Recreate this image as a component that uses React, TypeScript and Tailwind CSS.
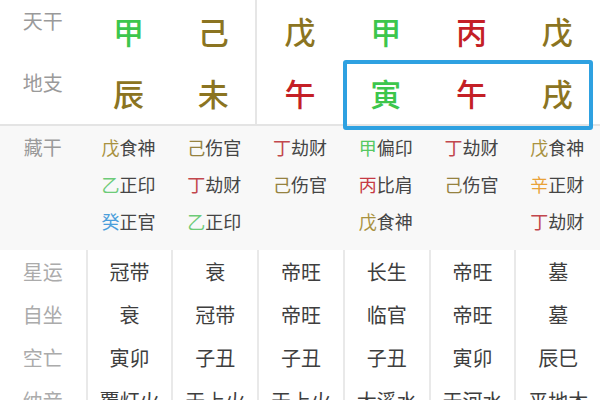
import React from 'react';

type Stem = { c: string; color: string };

const OLIVE = 'text-[#8b7421]';
const GREEN = 'text-[#3cc64c]';
const RED = 'text-[#c41f26]';

const topStems: Stem[] = [
  { c: '甲', color: GREEN },
  { c: '己', color: OLIVE },
  { c: '戊', color: OLIVE },
  { c: '甲', color: GREEN },
  { c: '丙', color: RED },
  { c: '戊', color: OLIVE },
];

const topBranches: Stem[] = [
  { c: '辰', color: OLIVE },
  { c: '未', color: OLIVE },
  { c: '午', color: RED },
  { c: '寅', color: GREEN },
  { c: '午', color: RED },
  { c: '戌', color: OLIVE },
];

// hidden stems colours (a bit softer than the top row)
const hc: Record<string, string> = {
  戊: 'text-[#a9923f]',
  己: 'text-[#958240]',
  丁: 'text-[#c2474d]',
  乙: 'text-[#6dcb78]',
  癸: 'text-[#4b9edb]',
  甲: 'text-[#56c862]',
  丙: 'text-[#c63a44]',
  辛: 'text-[#e9a238]',
};

const hidden: [string, string][][] = [
  [['戊', '食神'], ['乙', '正印'], ['癸', '正官']],
  [['己', '伤官'], ['丁', '劫财'], ['乙', '正印']],
  [['丁', '劫财'], ['己', '伤官']],
  [['甲', '偏印'], ['丙', '比肩'], ['戊', '食神']],
  [['丁', '劫财'], ['己', '伤官']],
  [['戊', '食神'], ['辛', '正财'], ['丁', '劫财']],
];

const bottomRows: { label: string; values: string[] }[] = [
  { label: '星运', values: ['冠带', '衰', '帝旺', '长生', '帝旺', '墓'] },
  { label: '自坐', values: ['衰', '冠带', '帝旺', '临官', '帝旺', '墓'] },
  { label: '空亡', values: ['寅卯', '子丑', '子丑', '子丑', '寅卯', '辰巳'] },
  { label: '纳音', values: ['覆灯火', '天上火', '天上火', '大溪水', '天河水', '平地木'] },
];

const font = { fontFamily: '"Noto Sans CJK SC", "Noto Sans", sans-serif' };

function BigRow({ label, items }: { label: string; items: Stem[] }) {
  return (
    <div className="grid grid-cols-7 h-[62px]">
      <div className="flex items-start justify-center pt-[6px] text-[20px] text-[#9a9a9a]">{label}</div>
      {items.map((s, i) => (
        <div
          key={i}
          className={`flex items-center justify-center text-[31px] font-medium ${s.color} ${i === 1 ? 'border-r-2 border-[#e6e6e6]' : ''}`}
        >
          {s.c}
        </div>
      ))}
    </div>
  );
}

export default function App() {
  return (
    <div className="w-[600px] h-[400px] overflow-hidden bg-white" style={font}>
      {/* pillars */}
      <div className="relative h-[126px] border-b-2 border-[#e4e4e4]">
        <BigRow label="天干" items={topStems} />
        <BigRow label="地支" items={topBranches} />
        {/* highlight around the last three branches */}
        <div className="absolute left-[343px] top-[60px] w-[250px] h-[70px] border-4 border-[#2ea1e1] rounded-[3px] z-10" />
      </div>

      {/* 藏干 */}
      <div className="grid grid-cols-7 h-[124px] bg-[#f8f8f8] pt-[3px]">
        <div className="flex justify-center h-[37px] items-center text-[19px] text-[#9a9a9a]">藏干</div>
        {hidden.map((col, i) => (
          <div key={i} className="flex flex-col items-center">
            {col.map(([stem, god], j) => (
              <div key={j} className="h-[37px] flex items-center text-[18px] text-[#454545]">
                <span className={hc[stem]}>{stem}</span>
                <span>{god}</span>
              </div>
            ))}
          </div>
        ))}
      </div>

      {/* lower table */}
      <div className="grid grid-cols-7">
        <div className="flex flex-col">
          {bottomRows.map((r) => (
            <div key={r.label} className="h-[43px] flex items-center justify-center text-[20px] text-[#ababab]">
              {r.label}
            </div>
          ))}
        </div>
        {[0, 1, 2, 3, 4, 5].map((ci) => (
          <div key={ci} className="flex flex-col border-l-2 border-[#e9e9e9]">
            {bottomRows.map((r) => (
              <div key={r.label} className="h-[43px] flex items-center justify-center text-[20px] text-[#3e3e3e]">
                {r.values[ci]}
              </div>
            ))}
          </div>
        ))}
      </div>
    </div>
  );
}
